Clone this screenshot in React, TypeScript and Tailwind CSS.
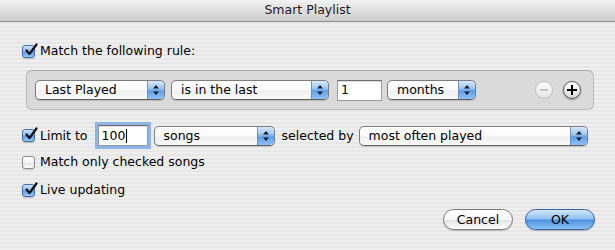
import type { ReactNode } from "react";

const font = "font-['Lucida_Grande','DejaVu_Sans',Verdana,sans-serif]";

function CheckBox({ checked }: { checked?: boolean }) {
  return (
    <span
      className={
        checked
          ? "relative block h-[13px] w-[13px] shrink-0 rounded-[3px] border border-[#3f6fae] bg-[linear-gradient(180deg,#cfe4fb_0%,#8fbdf0_45%,#5c9ae6_55%,#9cc8f5_100%)] shadow-[0_1px_1px_rgba(0,0,0,0.2)]"
          : "relative block h-[13px] w-[13px] shrink-0 rounded-[3px] border border-[#8a8a8a] bg-[linear-gradient(180deg,#ffffff_0%,#f2f2f2_50%,#e4e4e4_55%,#fafafa_100%)] shadow-[0_1px_1px_rgba(0,0,0,0.15)]"
      }
    >
      {checked && (
        <svg viewBox="0 0 14 14" className="absolute left-[1px] top-[-3px] h-[14px] w-[14px]">
          <path d="M2.5 7.5 L5.5 11 L12.5 1.5" fill="none" stroke="#111" strokeWidth="2.2" strokeLinecap="round" strokeLinejoin="round" />
        </svg>
      )}
    </span>
  );
}

function Arrows() {
  return (
    <span className="flex h-full w-[17px] shrink-0 items-center justify-center rounded-r-[4px] border-l border-[#6f8fbf] bg-[linear-gradient(180deg,#d6e9fc_0%,#9ec9f4_40%,#5e9ee9_55%,#8cc2f6_100%)]">
      <svg viewBox="0 0 8 12" className="h-[12px] w-[8px]">
        <path d="M4 1 L7 4.5 L1 4.5 Z" fill="#1a1a1a" />
        <path d="M4 11 L7 7.5 L1 7.5 Z" fill="#1a1a1a" />
      </svg>
    </span>
  );
}

function Popup({ label, width }: { label: string; width: string }) {
  return (
    <div
      className={`flex h-[20px] ${width} shrink-0 items-center overflow-hidden rounded-[5px] border border-[#7c7c7c] border-b-[#5e5e5e] bg-[linear-gradient(180deg,#ffffff_0%,#fbfbfb_50%,#eeeeee_55%,#fafafa_100%)] shadow-[0_1px_1px_rgba(0,0,0,0.15)]`}
    >
      <span className="flex-1 whitespace-nowrap pl-[9px] text-[12.5px] leading-[16px] text-black">{label}</span>
      <Arrows />
    </div>
  );
}

function Field({ children, width, focus }: { children: ReactNode; width: string; focus?: boolean }) {
  return (
    <div
      className={`flex h-[21px] ${width} shrink-0 items-center border border-[#9a9a9a] border-t-[#6e6e6e] bg-white pl-[3px] text-[12.5px] leading-[16px] text-black shadow-[inset_0_1px_1px_rgba(0,0,0,0.15)] ${
        focus ? "outline-[3px] outline-solid outline-[#8fb4e6]" : ""
      }`}
    >
      {children}
    </div>
  );
}

function Row({ checked, label }: { checked?: boolean; label: string }) {
  return (
    <div className="flex items-center">
      <CheckBox checked={checked} />
      <span className="ml-[5px] whitespace-nowrap text-[12.5px] leading-[16px] text-black">{label}</span>
    </div>
  );
}

export default function App() {
  return (
    <div
      className={`${font} h-[250px] w-[615px] overflow-hidden bg-[repeating-linear-gradient(180deg,#efefef_0px,#efefef_2px,#e7e7e7_2px,#e7e7e7_4px)]`}
    >
      <div className="flex h-[22px] items-center justify-center border-b border-[#8d8d8d] bg-[linear-gradient(180deg,#f2f2f2_0%,#dedede_50%,#cdcdcd_100%)] text-[12.5px] text-[#1c1c1c]">
        Smart Playlist
      </div>

      <div className="pl-[22px]">
        <div className="mt-[22px] flex h-[14px] items-center">
          <Row checked label="Match the following rule:" />
        </div>

        <div className="ml-[4px] mt-[12px] flex h-[40px] w-[568px] items-center rounded-[6px] border border-[#bdbdbd] border-t-[#a9a9a9] bg-[#dadada] pl-[8px] pr-[12px]">
          <Popup label="Last Played" width="w-[130px]" />
          <div className="w-[6px]" />
          <Popup label="is in the last" width="w-[158px]" />
          <div className="w-[8px]" />
          <Field width="w-[45px]">1</Field>
          <div className="w-[5px]" />
          <Popup label="months" width="w-[89px]" />
          <div className="flex-1" />
          <span className="flex h-[18px] w-[18px] items-center justify-center rounded-full border border-[#c2c2c2] bg-[linear-gradient(180deg,#fafafa_0%,#e6e6e6_100%)]">
            <span className="block h-[2px] w-[8px] bg-[#c4c4c4]" />
          </span>
          <div className="w-[10px]" />
          <span className="relative flex h-[18px] w-[18px] items-center justify-center rounded-full border border-[#5f5f5f] bg-[linear-gradient(180deg,#ffffff_0%,#f0f0f0_50%,#d6d6d6_100%)] shadow-[0_1px_2px_rgba(0,0,0,0.35)]">
            <span className="absolute h-[2px] w-[10px] bg-black" />
            <span className="absolute h-[10px] w-[2px] bg-black" />
          </span>
        </div>

        <div className="mt-[15px] flex h-[21px] items-center">
          <Row checked label="Limit to" />
          <div className="ml-[10px]">
            <Field width="w-[50px]" focus>
              100<span className="ml-[1px] inline-block h-[14px] w-px bg-black" />
            </Field>
          </div>
          <div className="ml-[6px]">
            <Popup label="songs" width="w-[121px]" />
          </div>
          <span className="ml-[7px] whitespace-nowrap text-[12.5px] leading-[16px] text-black">selected by</span>
          <div className="ml-[5px]">
            <Popup label="most often played" width="w-[229px]" />
          </div>
        </div>

        <div className="mt-[9px] flex h-[14px] items-center">
          <Row label="Match only checked songs" />
        </div>

        <div className="mt-[14px] flex h-[14px] items-center">
          <Row checked label="Live updating" />
        </div>

        <div className="mt-[12px] flex justify-end gap-[12px] pr-[20px]">
          <button
            type="button"
            className="h-[21px] w-[70px] rounded-full border border-[#7a7a7a] bg-[linear-gradient(180deg,#ffffff_0%,#f7f7f7_50%,#e6e6e6_55%,#fbfbfb_100%)] text-[12.5px] leading-[16px] text-black shadow-[0_1px_1px_rgba(0,0,0,0.2)]"
          >
            Cancel
          </button>
          <button
            type="button"
            className="h-[21px] w-[70px] rounded-full border border-[#34609e] bg-[linear-gradient(180deg,#d3e7fb_0%,#93c2f1_45%,#4f93e3_55%,#8cc4f7_100%)] text-[12.5px] leading-[16px] text-black shadow-[0_1px_1px_rgba(0,0,0,0.25)]"
          >
            OK
          </button>
        </div>
      </div>
    </div>
  );
}
